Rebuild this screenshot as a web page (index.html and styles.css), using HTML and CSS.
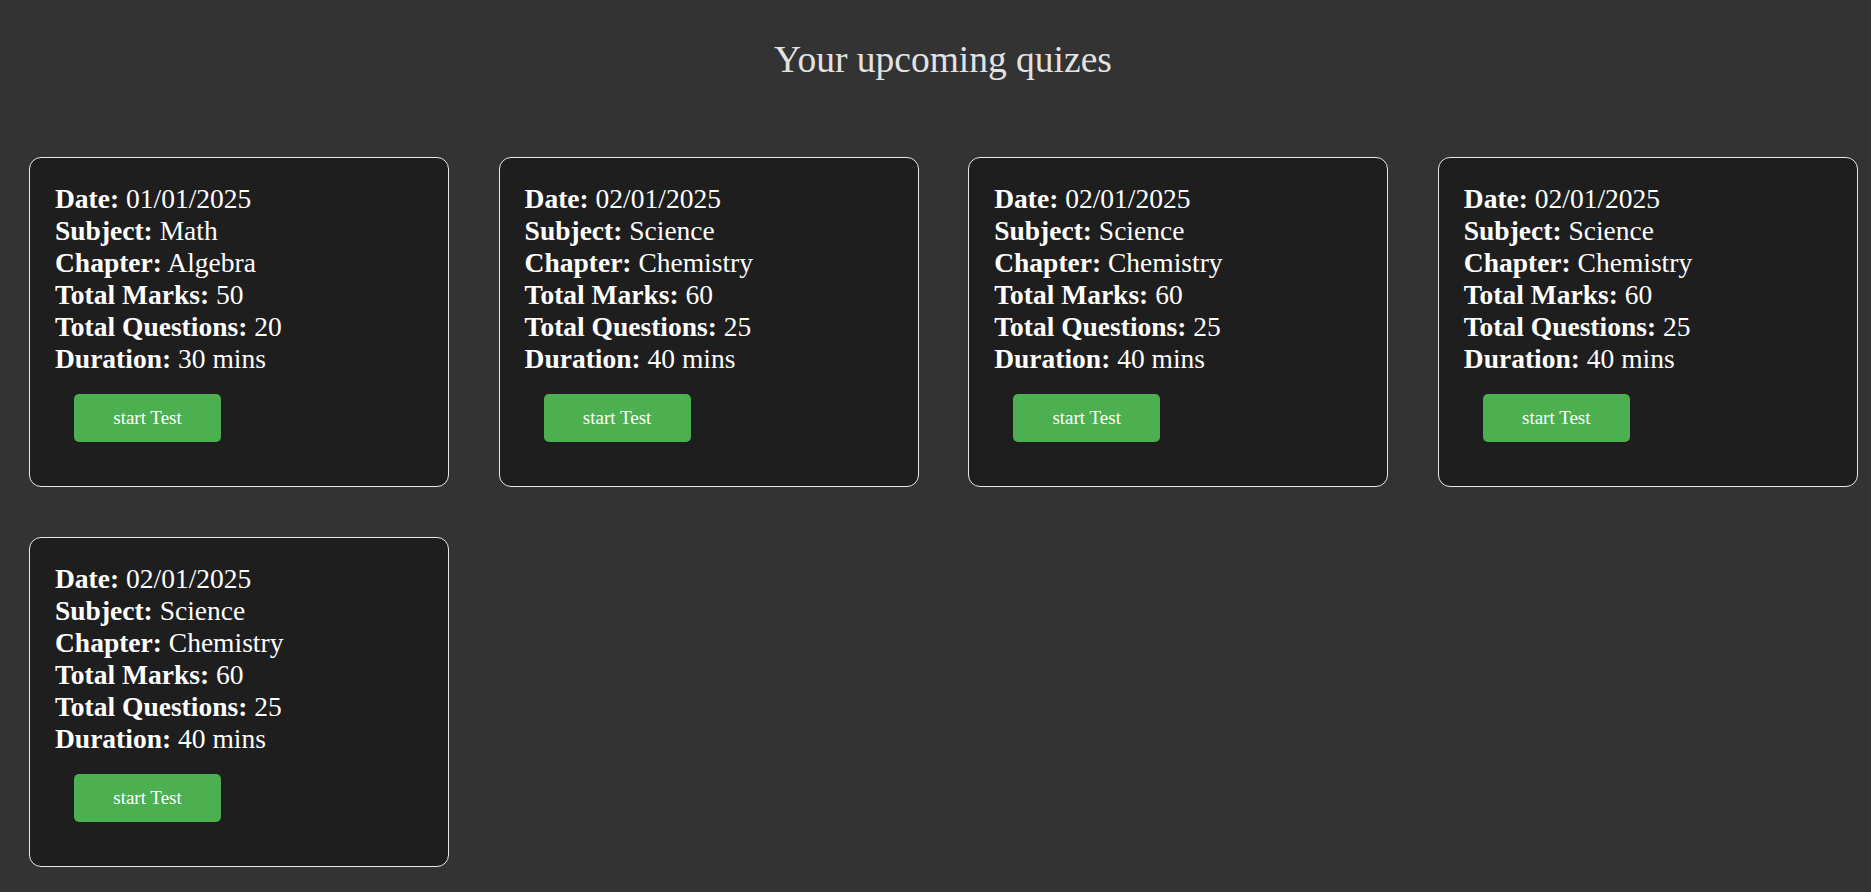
FILE: index.html
```html
<!DOCTYPE html>
<html lang="en">
<head>
<meta charset="utf-8">
<title>Upcoming quizes</title>
<link rel="stylesheet" href="styles.css">
</head>
<body>
<h1 class="title">Your upcoming quizes</h1>
<div class="quiz-grid">
  <div class="card">
    <div class="row"><b>Date:</b> 01/01/2025</div>
    <div class="row"><b>Subject:</b> Math</div>
    <div class="row"><b>Chapter:</b> Algebra</div>
    <div class="row"><b>Total Marks:</b> 50</div>
    <div class="row"><b>Total Questions:</b> 20</div>
    <div class="row"><b>Duration:</b> 30 mins</div>
    <button class="start">start Test</button>
  </div>
  <div class="card">
    <div class="row"><b>Date:</b> 02/01/2025</div>
    <div class="row"><b>Subject:</b> Science</div>
    <div class="row"><b>Chapter:</b> Chemistry</div>
    <div class="row"><b>Total Marks:</b> 60</div>
    <div class="row"><b>Total Questions:</b> 25</div>
    <div class="row"><b>Duration:</b> 40 mins</div>
    <button class="start">start Test</button>
  </div>
  <div class="card">
    <div class="row"><b>Date:</b> 02/01/2025</div>
    <div class="row"><b>Subject:</b> Science</div>
    <div class="row"><b>Chapter:</b> Chemistry</div>
    <div class="row"><b>Total Marks:</b> 60</div>
    <div class="row"><b>Total Questions:</b> 25</div>
    <div class="row"><b>Duration:</b> 40 mins</div>
    <button class="start">start Test</button>
  </div>
  <div class="card">
    <div class="row"><b>Date:</b> 02/01/2025</div>
    <div class="row"><b>Subject:</b> Science</div>
    <div class="row"><b>Chapter:</b> Chemistry</div>
    <div class="row"><b>Total Marks:</b> 60</div>
    <div class="row"><b>Total Questions:</b> 25</div>
    <div class="row"><b>Duration:</b> 40 mins</div>
    <button class="start">start Test</button>
  </div>
  <div class="card">
    <div class="row"><b>Date:</b> 02/01/2025</div>
    <div class="row"><b>Subject:</b> Science</div>
    <div class="row"><b>Chapter:</b> Chemistry</div>
    <div class="row"><b>Total Marks:</b> 60</div>
    <div class="row"><b>Total Questions:</b> 25</div>
    <div class="row"><b>Duration:</b> 40 mins</div>
    <button class="start">start Test</button>
  </div>
</div>
</body>
</html>
```
FILE: styles.css
```css
html, body {
  margin: 0;
  padding: 0;
  background: #333333;
  font-family: "Liberation Serif", "Times New Roman", serif;
}

.title {
  margin: 0;
  padding: 39px 0 0 15px;
  height: 123px;
  box-sizing: border-box;
  text-align: center;
  font-weight: normal;
  font-size: 37.5px;
  line-height: 42px;
  color: #e2e2e2;
}

.quiz-grid {
  display: flex;
  flex-wrap: wrap;
  gap: 50px 49.6px;
  padding: 34px 0 40px 29px;
}

.card {
  width: 420px;
  box-sizing: border-box;
  background: #1e1e1e;
  border: 1px solid #e8e8e8;
  border-radius: 12px;
  padding: 25px 25px;
  color: #ffffff;
  font-size: 27.5px;
  line-height: 32px;
}

.row b {
  font-weight: bold;
}

.start {
  display: block;
  margin: 19px;
  width: 147px;
  height: 48px;
  border: none;
  border-radius: 5px;
  background: #4caf50;
  color: #ffffff;
  font-family: "Liberation Serif", "Times New Roman", serif;
  font-size: 19px;
  padding: 0;
}
```
